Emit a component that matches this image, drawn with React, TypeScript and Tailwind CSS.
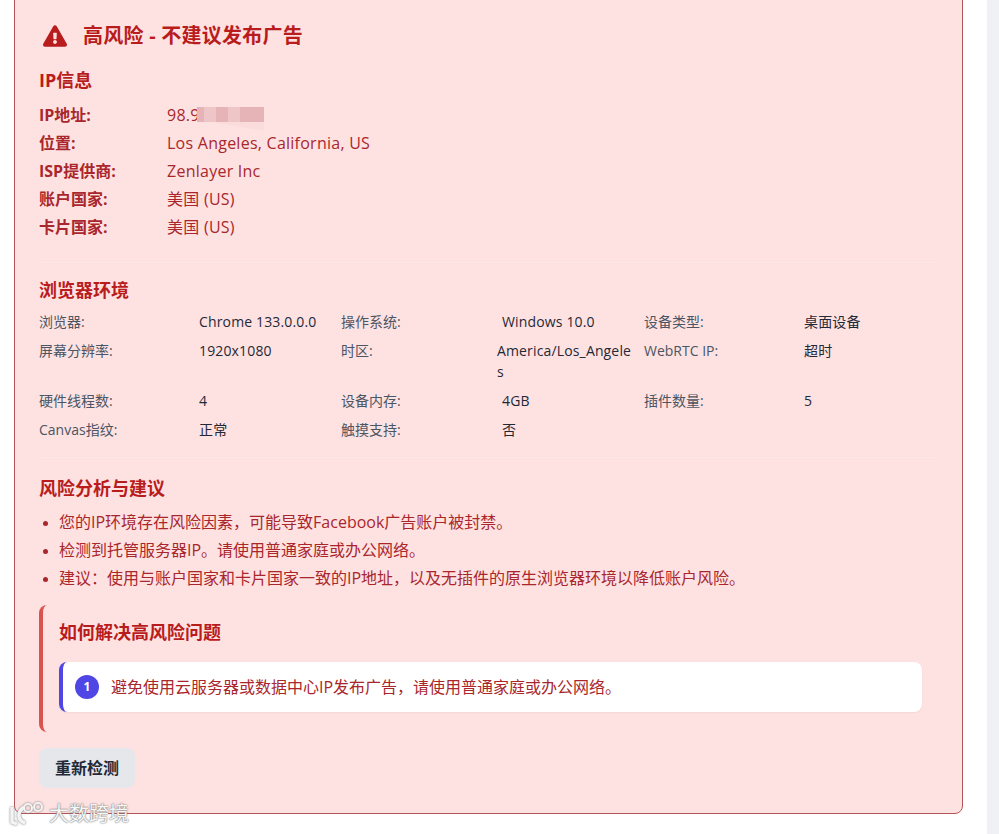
import { FaExclamationTriangle } from "react-icons/fa";

const ipRows = [
  { label: "位置:", value: "Los Angeles, California, US" },
  { label: "ISP提供商:", value: "Zenlayer Inc" },
  { label: "账户国家:", value: "美国 (US)" },
  { label: "卡片国家:", value: "美国 (US)" },
];

const envRows = [
  ["浏览器:", "Chrome 133.0.0.0", "操作系统:", "Windows 10.0", "设备类型:", "桌面设备"],
  ["屏幕分辨率:", "1920x1080", "时区:", "America/Los_Angeles", "WebRTC IP:", "超时"],
  ["硬件线程数:", "4", "设备内存:", "4GB", "插件数量:", "5"],
  ["Canvas指纹:", "正常", "触摸支持:", "否", "", ""],
];

const risks = [
  "您的IP环境存在风险因素，可能导致Facebook广告账户被封禁。",
  "检测到托管服务器IP。请使用普通家庭或办公网络。",
  "建议：使用与账户国家和卡片国家一致的IP地址，以及无插件的原生浏览器环境以降低账户风险。",
];

export default function App() {
  return (
    <div className="relative h-[834px] overflow-hidden bg-white font-['Open_Sans','Noto_Sans_CJK_SC',sans-serif] text-[#a9272c]">
      <div className="absolute top-0 right-0 bottom-0 w-3 bg-[#f0f1f4]" />

      <div className="ml-[14px] -mt-4 h-[830px] w-[949px] rounded-lg border border-[#b4555a] bg-[#fee2e2] px-6 pt-9">
        <div className="flex items-center gap-4 pl-[4px]">
          <FaExclamationTriangle className="text-[24px] text-[#b91c1c]" />
          <h1 className="text-[20px] leading-[30px] font-bold tracking-[0.25px] text-[#b91c1c]">高风险 - 不建议发布广告</h1>
        </div>

        <h2 className="mt-[16px] text-[18px] leading-[27px] font-bold text-[#b91c1c]">IP信息</h2>
        <div className="mt-[9px] flex flex-col gap-1 border-b border-[#fde6e6] pb-[23px]">
          <div className="flex h-6 items-center text-[16px]">
            <span className="w-32 font-bold">IP地址:</span>
            <span className="relative tracking-[0.25px]">
              98.91
              <span className="absolute top-[4px] left-[30px] h-[15px] w-[67px] bg-[linear-gradient(90deg,#e6b4b6_0_10%,#efc6c7_10%_28%,#e6b4b6_28%_46%,#efc6c7_46%_64%,#e6b4b6_64%)]" />
              <span className="absolute top-[19px] left-[44px] h-[9px] w-[53px] bg-[#fbdcdc] [clip-path:polygon(0_0,100%_0,100%_100%)]" />
            </span>
          </div>
          {ipRows.map((row) => (
            <div key={row.label} className="flex h-6 items-center text-[16px]">
              <span className="w-32 font-bold">{row.label}</span>
              <span className="tracking-[0.25px]">{row.value}</span>
            </div>
          ))}
        </div>

        <h2 className="mt-[14px] text-[18px] leading-[27px] font-bold text-[#b91c1c]">浏览器环境</h2>
        <div className="mt-[7px] grid grid-cols-[160px_142px_156px_147px_160px_1fr] gap-y-2 border-b border-[#fde6e6] pb-[17px] text-[14px] leading-[21px]">
          {envRows.map((row) =>
            row.map((cell, i) => {
              const isLabel = i % 2 === 0;
              const inset = i === 3 && cell !== "America/Los_Angeles";
              return (
                <span
                  key={row[0] + i}
                  className={`${isLabel ? "text-[#4b5563]" : "tracking-[0.15px] text-[#1f2937]"} ${inset ? "pl-[5px]" : ""} ${i === 3 ? "break-all pr-[8px]" : ""}`}
                >
                  {cell}
                </span>
              );
            })
          )}
        </div>

        <h2 className="mt-[17px] text-[18px] leading-[27px] font-bold text-[#b91c1c]">风险分析与建议</h2>
        <ul className="mt-[8px] flex list-disc flex-col gap-1 pl-5 text-[16px] leading-[24px] marker:text-[13px]">
          {risks.map((risk) => (
            <li key={risk}>{risk}</li>
          ))}
        </ul>

        <div className="mt-[15px] rounded-lg border-l-4 border-[#d9534f] pt-[14px] pb-[20px] pl-4 pr-[16px]">
          <h3 className="text-[18px] leading-[27px] font-bold text-[#b91c1c]">如何解决高风险问题</h3>
          <div className="mt-[16px] flex h-[50px] items-center gap-3 rounded-lg border-l-4 border-[#4f46e5] bg-white pl-3 shadow-xs">
            <span className="flex h-6 w-6 items-center justify-center rounded-full bg-[#4f46e5] text-[12px] font-bold text-white">1</span>
            <span className="text-[16px]">避免使用云服务器或数据中心IP发布广告，请使用普通家庭或办公网络。</span>
          </div>
        </div>

        <button className="mt-4 flex h-10 w-24 items-center justify-center rounded-lg bg-[#e5e7eb] text-[16px] font-bold text-[#1f2937]">
          重新检测
        </button>
      </div>

      <div className="absolute top-[801px] left-[9px] flex items-center gap-[4px] text-[#f7f7f7] [text-shadow:0_0_2px_#777,0_0_1px_#777]">
        <svg viewBox="0 0 36 26" className="h-[26px] w-[36px] fill-none stroke-[#f4f4f4] [filter:drop-shadow(0_0_1px_#777)]">
          <path d="M3 6v15l5 2M15 6c-7 5-7 13 1 16" strokeWidth="3.5" />
          <circle cx="19" cy="7" r="4" strokeWidth="2" />
          <circle cx="29" cy="6" r="4" strokeWidth="2" />
        </svg>
        <span className="text-[20px] leading-6">大数跨境</span>
      </div>
    </div>
  );
}
